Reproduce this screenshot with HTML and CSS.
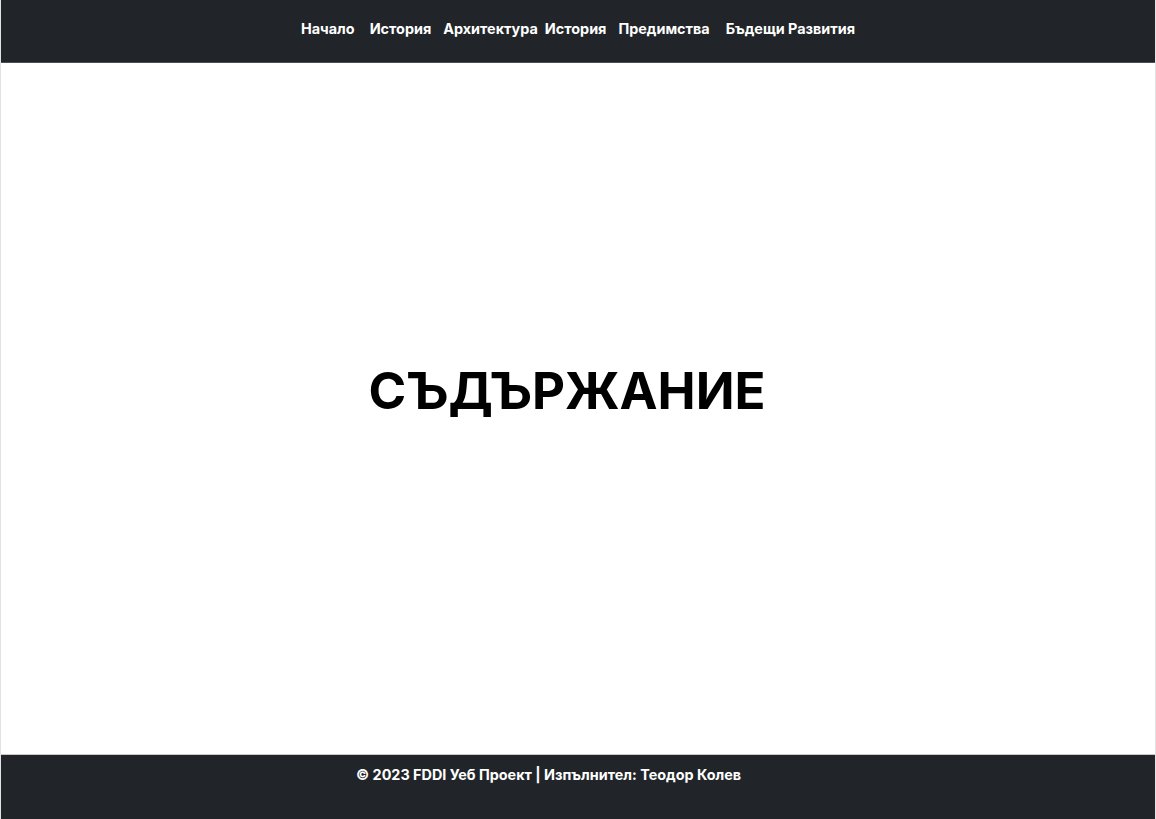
FILE: index.html
```html
<!DOCTYPE html>
<html lang="bg">
<head>
<meta charset="utf-8">
<title>Съдържание</title>
<link rel="stylesheet" href="styles.css">
</head>
<body>
<div class="page">
  <header class="topbar">
    <nav class="nav">
      <a class="nav-link" href="#">Начало</a>
      <a class="nav-link" href="#">История</a>
      <a class="nav-link" href="#">Архитектура</a>
      <a class="nav-link" href="#">История</a>
      <a class="nav-link" href="#">Предимства</a>
      <a class="nav-link" href="#">Бъдещи Развития</a>
    </nav>
  </header>
  <main class="content">
    <h1 class="title">СЪДЪРЖАНИЕ</h1>
  </main>
  <footer class="footer">
    <p class="footer-text">© 2023 FDDI Уеб Проект | Изпълнител: Теодор Колев</p>
  </footer>
</div>
</body>
</html>
```
FILE: styles.css
```css
html, body {
  margin: 0;
  padding: 0;
  background: #ffffff;
}
body {
  font-family: Inter, "Noto Sans", sans-serif;
}
.page {
  box-sizing: border-box;
  height: 819px;
  display: flex;
  flex-direction: column;
  border-left: 1px solid #e2e2e2;
  border-right: 1px solid #e2e2e2;
}
.topbar {
  background: #212529;
  height: 62px;
  border-bottom: 1px solid #4a4d52;
  display: flex;
  align-items: center;
  justify-content: center;
}
.nav {
  display: flex;
  gap: 12px;
  padding-bottom: 6px;
}
.nav-link {
  color: #ffffff;
  text-decoration: none;
  font-weight: 700;
  font-size: 14.4px;
}
.nav-link:nth-child(2) {
  margin-left: 3px;
}
.nav-link:nth-child(4) {
  margin-left: -5px;
}
.nav-link:nth-child(6) {
  margin-left: 4px;
}
.content {
  flex: 1;
  display: flex;
  align-items: center;
  justify-content: center;
  padding-right: 22px;
  padding-bottom: 36px;
}
.title {
  margin: 0;
  font-size: 51px;
  font-weight: 700;
  color: #000000;
}
.footer {
  background: #212529;
  height: 64px;
  border-top: 1px solid #c8c8c8;
}
.footer-text {
  margin: 0;
  padding: 11px 0 0 355px;
  color: #ffffff;
  font-weight: 700;
  font-size: 14.4px;
}
```
